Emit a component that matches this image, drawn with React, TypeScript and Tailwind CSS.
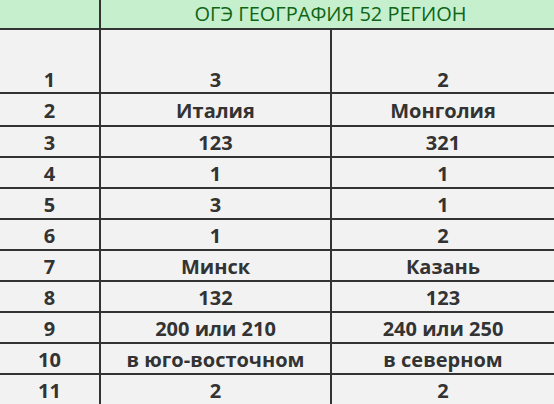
const rows: [string, string, string][] = [
  ["2", "Италия", "Монголия"],
  ["3", "123", "321"],
  ["4", "1", "1"],
  ["5", "3", "1"],
  ["6", "1", "2"],
  ["7", "Минск", "Казань"],
  ["8", "132", "123"],
  ["9", "200 или 210", "240 или 250"],
  ["10", "в юго-восточном", "в северном"],
  ["11", "2", "2"],
];

export default function App() {
  const cell = "flex items-center justify-center pt-[3px] border-b-2 border-[#333]";
  const tall = "h-[64px] flex items-end justify-center pb-[2px] leading-[20px] border-b-2 border-[#333]";
  return (
    <div
      className="w-[554px] h-[404px] overflow-hidden bg-[#f2f2f2] text-[#333] font-bold text-[20px]"
      style={{ fontFamily: '"Open Sans", "Noto Sans", sans-serif' }}>
      <div className="grid grid-cols-[101px_231px_1fr]">
        {/* header */}
        <div className="h-[30px] bg-[#c6efce] border-b-2 border-r-2 border-[#333]"></div>
        <div className="col-span-2 h-[30px] bg-[#c6efce] border-b-2 border-[#333] flex items-center justify-center pl-[6px] font-normal text-[20px] text-[#0f6516]">
          ОГЭ ГЕОГРАФИЯ 52 РЕГИОН
        </div>

        {/* tall first row */}
        <div className={`${tall} border-r-2`}>1</div>
        <div className={`${tall} border-r-2`}>3</div>
        <div className={tall}>2</div>

        {rows.map(([n, a, b], i) => {
          const h = i === 0 ? "h-[33px]" : "h-[31px]";
          return (
            <div key={n} className="contents">
              <div className={`${cell} ${h} border-r-2`}>{n}</div>
              <div className={`${cell} ${h} border-r-2`}>{a}</div>
              <div className={`${cell} ${h}`}>{b}</div>
            </div>
          );
        })}
      </div>
    </div>
  );
}
